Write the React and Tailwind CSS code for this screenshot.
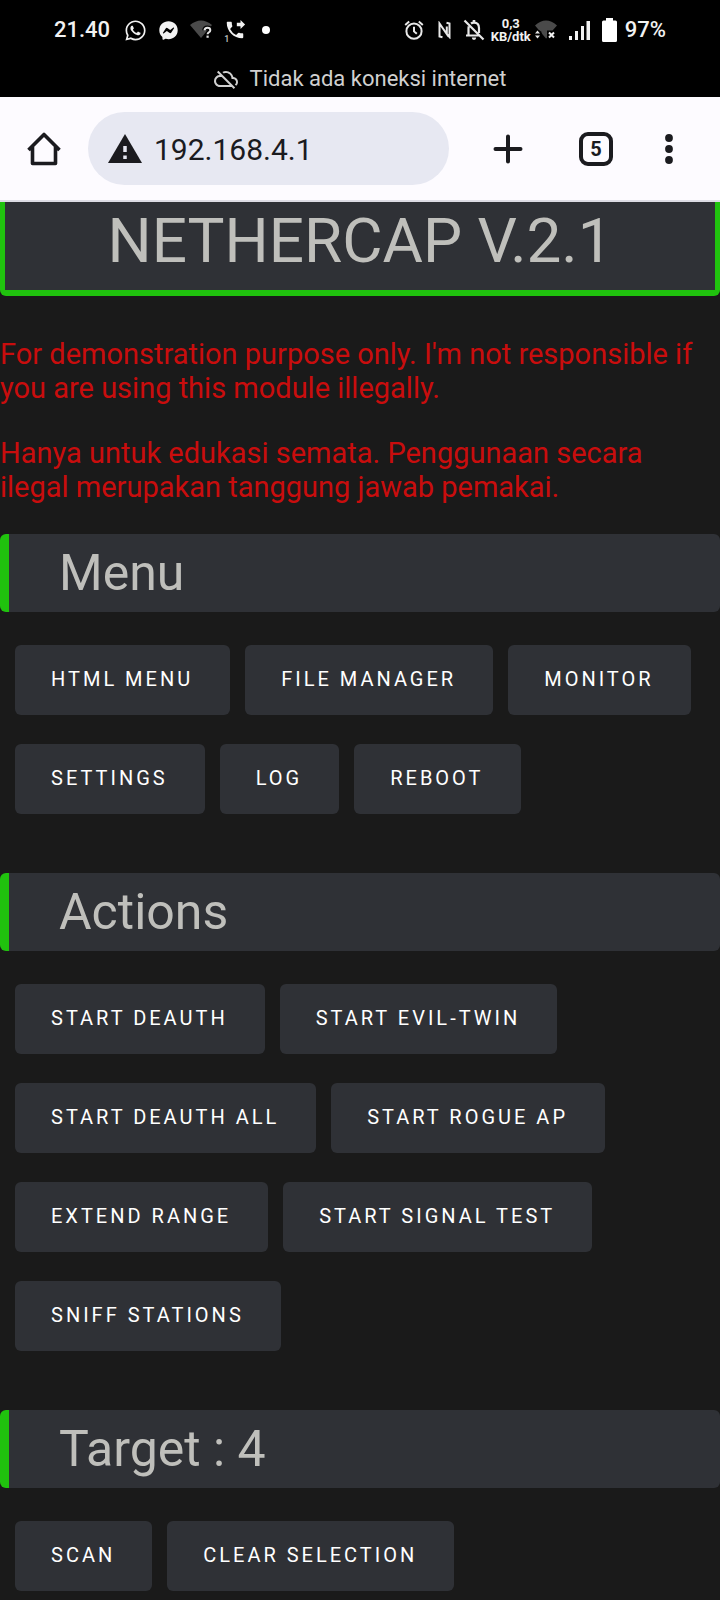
import React from "react";
import { FaWhatsapp, FaFacebookMessenger } from "react-icons/fa";
import { MdOutlineCloudOff, MdPhoneForwarded } from "react-icons/md";

function WifiUnknown() {
  return (
    <svg viewBox="0 0 22 20" className="h-5 w-[22px]">
      <path d="M0 5 Q11 -4 22 5 L11 18 Z" fill="#4a4a4a" />
      <path d="M14.5 10.4 q.2-2.6 2.9-2.6 q2.9 0 2.9 2.4 q0 1.4-1.5 2.2 q-1.2.7-1.2 1.9" fill="none" stroke="#000" strokeWidth="4.5" />
      <path d="M14.5 10.4 q.2-2.6 2.9-2.6 q2.9 0 2.9 2.4 q0 1.4-1.5 2.2 q-1.2.7-1.2 1.9" fill="none" stroke="#e4e4e4" strokeWidth="2" />
      <rect x="16.5" y="15.6" width="2.2" height="2.2" fill="#e4e4e4" />
    </svg>
  );
}

function Alarm() {
  return (
    <svg viewBox="0 0 20 20" className="size-5" fill="none" stroke="#e8e8e8" strokeWidth="2">
      <circle cx="10" cy="11.2" r="7.6" />
      <path d="M10 6.8v4.6l2.8 2.4M1.2 4.900l4-3.400M18.800 4.900l-4-3.400" />
    </svg>
  );
}

function Nfc() {
  return (
    <svg viewBox="0 0 13 18" className="h-[18px] w-[13px]" fill="none" stroke="#e8e8e8" strokeWidth="2">
      <path d="M4.500 16.300L1.500 15.500V2.500L8.800 13V5.500M8.500 1.700L11.500 2.500V16L8.800 13" />
    </svg>
  );
}

function BellOff() {
  return (
    <svg viewBox="0 0 22 22" className="size-[22px]" fill="none" stroke="#e8e8e8" strokeWidth="2.200">
      <path d="M1.500 1.500l19 19M8 4.500q1.200-.9 3-.9 5 0 5 5.400v5M5.800 7.500q-.3.800-.3 2v6.500M3 16.500h14" />
      <path d="M11 1v2.500" strokeWidth="2.600" />
      <path d="M8.800 18.500h4.400q0 2.400-2.200 2.400t-2.200-2.400z" fill="#e8e8e8" stroke="none" />
    </svg>
  );
}

function WifiOff() {
  return (
    <svg viewBox="0 0 22 20" className="h-5 w-[22px]">
      <path d="M0 5.500 Q11 -4.500 22 5.500 L17.500 10.500 H12 V18 L11 18.500 Z" fill="#4a4a4a" />
      <circle cx="2.500" cy="14.500" r="4.500" fill="#000" />
      <path d="M0 13.500L2.500 10.500L5 13.500ZM0 15.500L2.500 18.500L5 15.500Z" fill="#e8e8e8" />
      <path d="M14 12.500l5 5M19 12.500l-5 5" stroke="#f2f2f2" strokeWidth="2" />
    </svg>
  );
}

function Signal() {
  return (
    <svg viewBox="0 0 21 19" className="h-[19px] w-[21px]" fill="#f2f2f2">
      <rect x="0" y="15" width="3" height="4" />
      <rect x="6" y="10" width="3" height="9" />
      <rect x="12" y="5" width="3" height="14" />
      <rect x="17.500" y="0" width="3.500" height="19" />
    </svg>
  );
}

function Battery() {
  return (
    <svg viewBox="0 0 15 24" className="h-6 w-[15px]" fill="#fff">
      <path d="M4 0h7v2.500h2.500q1.500 0 1.500 1.500v18.500q0 1.500-1.500 1.500h-12q-1.500 0-1.500-1.500v-18.500q0-1.500 1.500-1.500H4z" />
    </svg>
  );
}

function StatusBar() {
  return (
    <header className="bg-black pt-4 text-[#f2f2f2]">
      <div className="flex h-7 items-center justify-between px-[54px] font-medium">
        <div className="flex items-center gap-3">
          <time className="pr-0.5 text-[22px] leading-7">21.40</time>
          <FaWhatsapp className="size-[23px]" />
          <FaFacebookMessenger className="size-[19px]" />
          <WifiUnknown />
          <span className="relative">
            <MdPhoneForwarded className="size-[22px]" />
            <small className="absolute bottom-[-2px] left-0 text-[9px] leading-2 text-[#c0c0c0]">1</small>
          </span>
          <span className="ml-1 size-2 rounded-full bg-white" />
        </div>
        <div className="flex items-center">
          <Alarm />
          <span className="ml-[14px]"><Nfc /></span>
          <span className="ml-3"><BellOff /></span>
          <span className="ml-1.5 text-center text-[13px] leading-[13px] font-bold">
            0,3
            <br />
            KB/dtk
          </span>
          <span className="ml-1"><WifiOff /></span>
          <span className="ml-3"><Signal /></span>
          <span className="ml-3"><Battery /></span>
          <span className="ml-2 text-[22px] leading-7">97%</span>
        </div>
      </div>
      <p className="flex h-[53px] items-end justify-center gap-3 pb-1 text-[22px] leading-7 text-[#d0d0d0]">
        <MdOutlineCloudOff className="mb-0.5 size-6" />
        Tidak ada koneksi internet
      </p>
    </header>
  );
}

function BrowserBar() {
  return (
    <nav className="flex h-[105px] items-center border-b-2 border-[#dddce4] bg-[#fdfbff] pl-[27px] pr-[47px] text-[#1b1b1f]">
      <button type="button" aria-label="Home" className="shrink-0">
        <svg viewBox="0 0 34 34" className="size-[34px]" fill="none" stroke="currentColor" strokeWidth="3.600">
          <path d="M1.500 18L17 2.500L32.500 18M5.500 15V31.500H28.500V15" strokeLinejoin="round" />
        </svg>
      </button>
      <label className="ml-[27px] flex h-[73px] min-w-0 flex-1 items-center gap-3 rounded-full bg-[#e7e8f2] pl-5">
        <svg viewBox="0 0 34 29" className="h-[29px] w-[34px] shrink-0">
          <path d="M17 0L34 29H0Z" fill="#1b1b1f" />
          <path d="M17 12v6M17 21.500v3.500" stroke="#e7e8f2" strokeWidth="3.500" />
        </svg>
        <input
          aria-label="Address"
          defaultValue="192.168.4.1"
          className="w-full min-w-0 bg-transparent pt-0.5 text-[30px] leading-9 outline-none"
        />
      </label>
      <button type="button" aria-label="New tab" className="ml-11 shrink-0">
        <svg viewBox="0 0 30 30" className="size-[30px]" stroke="currentColor" strokeWidth="4" strokeLinecap="round">
          <path d="M15 2.500v25M2.500 15h25" />
        </svg>
      </button>
      <button
        type="button"
        aria-label="5 open tabs"
        className="ml-[56px] flex size-[34px] shrink-0 items-center justify-center rounded-[9px] border-4 border-current text-xl leading-6 font-bold"
      >
        5
      </button>
      <button type="button" aria-label="More" className="ml-[52px] shrink-0">
        <svg viewBox="0 0 8 30" className="h-[30px] w-2" fill="currentColor" overflow="visible">
          <circle cx="4" cy="4" r="3.900" />
          <circle cx="4" cy="15" r="3.900" />
          <circle cx="4" cy="26" r="3.900" />
        </svg>
      </button>
    </nav>
  );
}

function Section({ title, actions }) {
  return (
    <section className="mb-[59px] last:mb-0">
      <h2 className="rounded-md border-l-[9px] border-[#20c20e] bg-[#2f3136] py-2 pl-[50px] text-[50px] leading-[62px] text-[#bfbfbb]">
        {title}
      </h2>
      <div className="mt-[33px] flex flex-wrap gap-x-[15px] gap-y-[29px] px-[15px]">
        {actions.map((label) => (
          <button
            key={label}
            type="button"
            className="h-[70px] rounded-md bg-[#2f3136] pr-[37px] pb-0.5 pl-9 text-xl leading-6 tracking-[3px] text-white uppercase"
          >
            {label}
          </button>
        ))}
      </div>
    </section>
  );
}

const sections = [
  { title: "Menu", actions: ["HTML Menu", "File Manager", "Monitor", "Settings", "Log", "Reboot"] },
  {
    title: "Actions",
    actions: [
      "Start Deauth",
      "Start Evil-Twin",
      "Start Deauth All",
      "Start Rogue AP",
      "Extend Range",
      "Start Signal Test",
      "Sniff Stations",
    ],
  },
  { title: "Target : 4", actions: ["Scan", "Clear Selection"] },
];

export default function App() {
  return (
    <div className="min-h-screen bg-[#1a1a1a] font-[Roboto,sans-serif]">
      <StatusBar />
      <BrowserBar />
      <main className="pb-2">
        <h1 className="rounded-b-md border-x-[5px] border-b-[6px] border-[#20c20e] bg-[#2f3136] pt-0.5 pb-3 text-center text-[62px] leading-[74px] text-[#bfbfbb]">
          NETHERCAP V.2.1
        </h1>
        <div className="mt-[41px] mb-[30px] flex flex-col gap-[31px] pr-4 text-[29px] leading-[34px] text-[#c90d0d]">
          <p>For demonstration purpose only. I'm not responsible if you are using this module illegally.</p>
          <p>Hanya untuk edukasi semata. Penggunaan secara ilegal merupakan tanggung jawab pemakai.</p>
        </div>
        {sections.map((section) => (
          <Section key={section.title} {...section} />
        ))}
      </main>
    </div>
  );
}
